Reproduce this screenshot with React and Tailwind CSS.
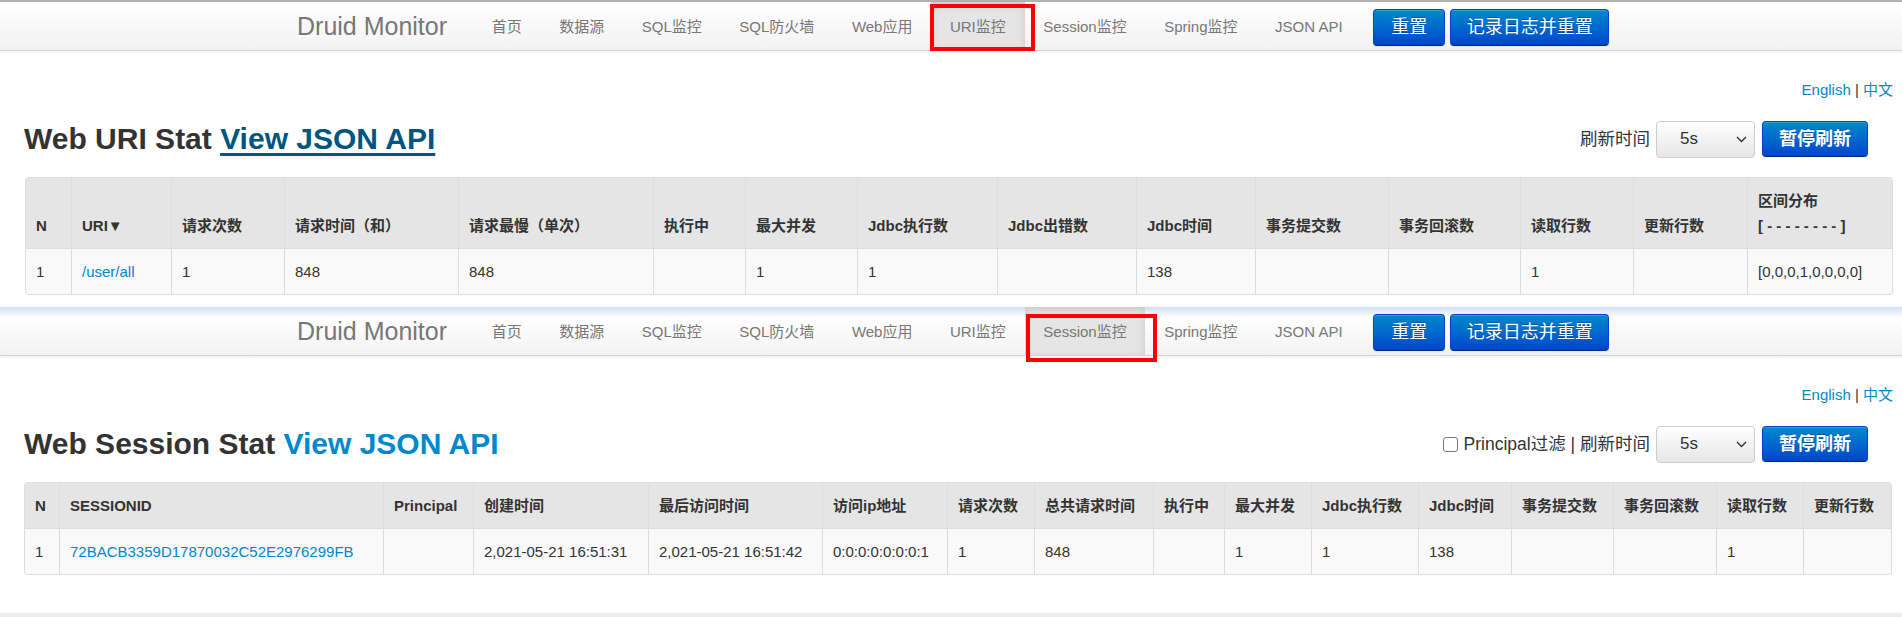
import React from "react";

const FONT = "font-['Liberation_Sans','Noto_Sans_CJK_SC',sans-serif]";

const NAV_ITEMS = ["首页", "数据源", "SQL监控", "SQL防火墙", "Web应用", "URI监控", "Session监控", "Spring监控", "JSON API"];

function BlueButton({ children, className = "" }) {
  return (
    <div
      className={`flex shrink-0 items-center justify-center whitespace-nowrap rounded-[4px] border border-[#0044cc] border-b-[#002a80] bg-linear-to-b from-[#0088cc] to-[#0044cc] text-white shadow-[inset_0_1px_0_rgba(255,255,255,0.2),0_1px_2px_rgba(0,0,0,0.05)] [text-shadow:0_-1px_0_rgba(0,0,0,0.25)] ${className}`}
    >
      {children}
    </div>
  );
}

function Navbar({ active, second }) {
  return (
    <div
      className={`h-[49px] border-b border-[#d4d4d4] shadow-[0_1px_4px_rgba(0,0,0,0.065)] ${
        second
          ? "bg-[linear-gradient(to_bottom,#cfdef2_0px,#eef3fa_7px,#ffffff_10px,#f2f2f2_100%)]"
          : "bg-linear-to-b from-white to-[#f2f2f2]"
      }`}
    >
      <div className="flex h-full items-stretch whitespace-nowrap pl-[297px]">
        <div className="mr-[26px] flex shrink-0 items-center pt-[2px] text-[25px] text-[#777]">Druid Monitor</div>
        {NAV_ITEMS.map((it) => (
          <div
            key={it}
            className={`flex shrink-0 items-center px-[18.75px] pt-[3px] text-[15px] text-[#777] ${
              it === active ? "bg-[#e5e5e5] shadow-[inset_0_3px_8px_rgba(0,0,0,0.125)]" : ""
            }`}
          >
            {it}
          </div>
        ))}
        <div className="ml-[12px] flex shrink-0 items-center gap-[5px] pt-[3px]">
          <BlueButton className="h-[37px] w-[72px] text-[18px]">重置</BlueButton>
          <BlueButton className="h-[37px] w-[159px] text-[18px]">记录日志并重置</BlueButton>
        </div>
      </div>
    </div>
  );
}

function LangLinks() {
  return (
    <div className="mt-[29px] pr-[8px] text-right text-[15px] leading-[20px] text-[#333]">
      <span className="text-[#0088cc]">English</span> | <span className="text-[#0088cc]">中文</span>
    </div>
  );
}

function RefreshControls({ principal }) {
  return (
    <div className="flex items-center whitespace-nowrap text-[17.5px] text-[#333]">
      {principal && (
        <span className="mr-[6px] inline-block h-[15px] w-[15px] rounded-[3px] border border-[#767676] bg-white" />
      )}
      <span>{principal ? "Principal过滤 | 刷新时间" : "刷新时间"}</span>
      <div className="ml-[6px] flex h-[37px] w-[99px] items-center justify-between rounded-[4px] border border-[#cccccc] bg-linear-to-b from-white to-[#e6e6e6] pl-[23px] pr-[7px] text-[17px] text-[#333]">
        <span>5s</span>
        <svg width="11" height="7" viewBox="0 0 11 7" fill="none">
          <path d="M1 1 L5.5 5.5 L10 1" stroke="#333" strokeWidth="1.4" />
        </svg>
      </div>
      <BlueButton className="ml-[7px] h-[36px] w-[106px] text-[18px] font-bold">暂停刷新</BlueButton>
    </div>
  );
}

const URI_COLS = [
  { h: "N", w: "w-[46px]" },
  { h: "URI▼", w: "w-[100px]" },
  { h: "请求次数", w: "w-[113px]" },
  { h: "请求时间（和）", w: "w-[174px]" },
  { h: "请求最慢（单次）", w: "w-[195px]" },
  { h: "执行中", w: "w-[92px]" },
  { h: "最大并发", w: "w-[112px]" },
  { h: "Jdbc执行数", w: "w-[140px]" },
  { h: "Jdbc出错数", w: "w-[139px]" },
  { h: "Jdbc时间", w: "w-[119px]" },
  { h: "事务提交数", w: "w-[133px]" },
  { h: "事务回滚数", w: "w-[132px]" },
  { h: "读取行数", w: "w-[113px]" },
  { h: "更新行数", w: "w-[114px]" },
  { h: "区间分布", w: "w-[145px]", two: "[ - - - - - - - - ]" },
];
const URI_ROW = ["1", "/user/all", "1", "848", "848", "", "1", "1", "", "138", "", "", "1", "", "[0,0,0,1,0,0,0,0]"];

const SES_COLS = [
  { h: "N", w: "w-[35px]" },
  { h: "SESSIONID", w: "w-[324px]" },
  { h: "Principal", w: "w-[90px]" },
  { h: "创建时间", w: "w-[175px]" },
  { h: "最后访问时间", w: "w-[174px]" },
  { h: "访问ip地址", w: "w-[125px]" },
  { h: "请求次数", w: "w-[87px]" },
  { h: "总共请求时间", w: "w-[119px]" },
  { h: "执行中", w: "w-[71px]" },
  { h: "最大并发", w: "w-[87px]" },
  { h: "Jdbc执行数", w: "w-[107px]" },
  { h: "Jdbc时间", w: "w-[93px]" },
  { h: "事务提交数", w: "w-[102px]" },
  { h: "事务回滚数", w: "w-[103px]" },
  { h: "读取行数", w: "w-[87px]" },
  { h: "更新行数", w: "w-[88px]" },
];
const SES_ROW = [
  "1",
  "72BACB3359D17870032C52E2976299FB",
  "",
  "2,021-05-21 16:51:31",
  "2,021-05-21 16:51:42",
  "0:0:0:0:0:0:0:1",
  "1",
  "848",
  "",
  "1",
  "1",
  "138",
  "",
  "",
  "1",
  "",
];

function StatTable({ cols, row, linkIndex }) {
  const last = cols.length - 1;
  return (
    <table className="mt-[18px] w-[1868px] table-fixed border-separate border-spacing-0 rounded-[4px] border border-l-0 border-[#dddddd] text-[15px] leading-[25px] text-[#333]">
      <thead>
        <tr>
          {cols.map((c, i) => (
            <th
              key={i}
              className={`${c.w} whitespace-nowrap border-l border-[#dddddd] bg-[#e5e5e5] px-[10px] py-[10px] text-left align-bottom font-bold ${
                i === 0 ? "rounded-tl-[4px]" : ""
              } ${i === last ? "rounded-tr-[4px]" : ""}`}
            >
              {c.h}
              {c.two && (
                <>
                  <br />
                  {c.two}
                </>
              )}
            </th>
          ))}
        </tr>
      </thead>
      <tbody>
        <tr>
          {row.map((v, i) => (
            <td
              key={i}
              className={`whitespace-nowrap border-l border-t border-[#dddddd] bg-[#f9f9f9] px-[10px] py-[10px] ${
                i === 0 ? "rounded-bl-[4px]" : ""
              } ${i === last ? "rounded-br-[4px]" : ""} ${i === linkIndex ? "text-[#0088cc]" : ""}`}
            >
              {v}
            </td>
          ))}
        </tr>
      </tbody>
    </table>
  );
}

export default function App() {
  return (
    <div className={`${FONT} h-[617px] w-[1902px] overflow-hidden bg-white`}>
      {/* first capture */}
      <section className="relative flex h-[305px] flex-col">
        <div className="h-[2px] bg-[#b2b2b2]" />
        <Navbar active="URI监控" />
        <div className="pl-[25px] pr-[1px]">
          <LangLinks />
          <div className="mt-[19px] flex h-[40px] items-center justify-between pr-[33px]">
            <h3 className="ml-[-1px] whitespace-nowrap text-[30px] font-bold leading-[40px] text-[#333]">
              Web URI Stat <span className="text-[#005580] underline decoration-[3px] underline-offset-[4px]">View JSON API</span>
            </h3>
            <RefreshControls />
          </div>
          <StatTable cols={URI_COLS} row={URI_ROW} linkIndex={1} />
        </div>
        <div className="pointer-events-none absolute left-[930px] top-[4px] h-[47px] w-[105px] border-[4px] border-[#ff0000]" />
      </section>

      {/* second capture */}
      <section className="relative flex h-[312px] flex-col">
        <div className="h-[2px] bg-white" />
        <Navbar active="Session监控" second />
        <div className="pl-[24px] pr-[1px]">
          <LangLinks />
          <div className="mt-[19px] flex h-[40px] items-center justify-between pr-[33px]">
            <h3 className="whitespace-nowrap text-[30px] font-bold leading-[40px] text-[#333]">
              Web Session Stat <span className="text-[#0088cc]">View JSON API</span>
            </h3>
            <RefreshControls principal />
          </div>
          <StatTable cols={SES_COLS} row={SES_ROW} linkIndex={1} />
        </div>
        <div className="mt-auto h-[4px] bg-[#ececec]" />
        <div className="pointer-events-none absolute left-[1026px] top-[9px] h-[48px] w-[131px] border-[4px] border-[#ff0000]" />
      </section>
    </div>
  );
}
